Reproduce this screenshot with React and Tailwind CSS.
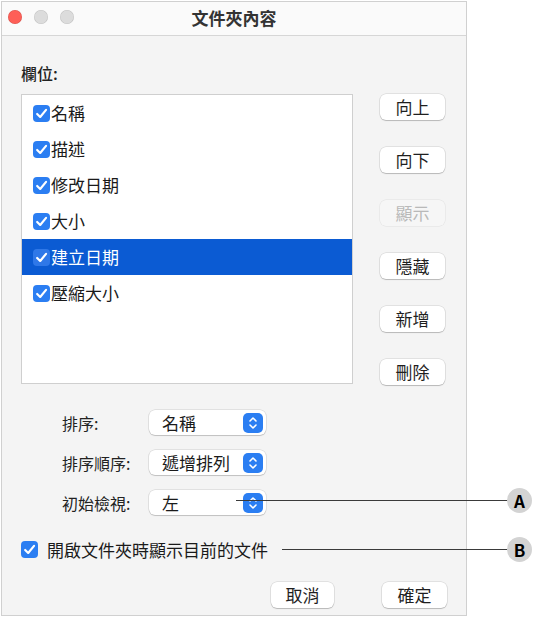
const fields = [
  { name: "名稱" },
  { name: "描述" },
  { name: "修改日期" },
  { name: "大小" },
  { name: "建立日期", selected: true },
  { name: "壓縮大小" },
];

const sideButtons = [
  { label: "向上" },
  { label: "向下" },
  { label: "顯示", disabled: true },
  { label: "隱藏" },
  { label: "新增" },
  { label: "刪除" },
];

const popups = [
  { label: "排序:", value: "名稱" },
  { label: "排序順序:", value: "遞增排列" },
  { label: "初始檢視:", value: "左" },
];

const CheckBox = ({ inverted }) => (
  <span
    className={`flex h-[17px] w-[17px] shrink-0 items-center justify-center rounded-[4px] ${
      inverted ? "bg-[#2f78e8]" : "bg-[#2b7ef2]"
    }`}
  >
    <svg width="13" height="13" viewBox="0 0 12 12" fill="none">
      <path d="M2 6.4 L4.8 9.2 L10.2 2.6" stroke="white" strokeWidth="2" strokeLinecap="round" strokeLinejoin="round" />
    </svg>
  </span>
);

const MacButton = ({ children, disabled, width = "w-[65px]" }) => (
  <button
    className={`${width} h-[26px] rounded-[6px] text-[17px] leading-[26px] ${
      disabled
        ? "bg-[#f6f6f6] text-[#b9b9b9] shadow-[0_0_0_0.5px_rgba(0,0,0,0.08)]"
        : "bg-white text-[#1f1f1f] shadow-[0_0_0_0.5px_rgba(0,0,0,0.15),0_1px_1px_rgba(0,0,0,0.18)]"
    }`}
  >
    {children}
  </button>
);

const Stepper = () => (
  <span className="flex h-[20px] w-[20px] items-center justify-center rounded-[5px] bg-[#2b7ef2]">
    <svg width="10" height="14" viewBox="0 0 10 14" fill="none">
      <path d="M2 5 L5 2 L8 5" stroke="white" strokeWidth="1.6" strokeLinecap="round" strokeLinejoin="round" />
      <path d="M2 9 L5 12 L8 9" stroke="white" strokeWidth="1.6" strokeLinecap="round" strokeLinejoin="round" />
    </svg>
  </span>
);

const Callout = ({ letter, top, left }) => (
  <div className="absolute flex items-center" style={{ top, left }}>
    <div className="h-px bg-[#3a3a3a]" style={{ width: 508 - left }} />
    <div className="flex h-[25px] w-[25px] -translate-x-px items-center justify-center rounded-full bg-[#d3d3d3] text-[17px] font-bold text-black">
      {letter}
    </div>
  </div>
);

export default function App() {
  return (
    <div
      className="relative h-[618px] w-[544px] bg-white pl-px pt-px"
      style={{ fontFamily: '"Noto Sans CJK TC", "Noto Sans", sans-serif' }}
    >
      <div className="flex h-[615px] w-[466px] flex-col border border-[#d0d0d0] bg-[#f4f4f4]">
        {/* title bar */}
        <div className="relative flex h-[34px] shrink-0 items-center justify-center border-b border-[#d6d6d6] bg-[#fafafa]">
          <div className="absolute left-[6px] top-[8px] flex gap-[12px]">
            <span className="h-[14px] w-[14px] rounded-full bg-[#fe5f57] shadow-[inset_0_0_0_0.5px_rgba(0,0,0,0.15)]" />
            <span className="h-[14px] w-[14px] rounded-full bg-[#dcdcdc] shadow-[inset_0_0_0_0.5px_rgba(0,0,0,0.12)]" />
            <span className="h-[14px] w-[14px] rounded-full bg-[#dcdcdc] shadow-[inset_0_0_0_0.5px_rgba(0,0,0,0.12)]" />
          </div>
          <span className="-mt-[2px] text-[17px] font-semibold text-[#333]">文件夾內容</span>
        </div>

        {/* content */}
        <div className="flex flex-col pl-[19px]">
          <div className="mt-[27px] text-[16px] leading-[20px] font-medium text-[#222]">欄位:</div>

          <div className="mt-[11px] flex">
            <div className="flex h-[290px] w-[332px] flex-col border border-[#cfcfcf] bg-white">
              {fields.map((f) => (
                <div
                  key={f.name}
                  className={`flex h-[36px] items-center pl-[11px] text-[17px] ${
                    f.selected ? "bg-[#0b5bd3] text-white" : "text-[#1a1a1a]"
                  }`}
                >
                  <CheckBox inverted={f.selected} />
                  <span className="ml-px">{f.name}</span>
                </div>
              ))}
            </div>

            <div className="ml-[27px] flex flex-col gap-[27px]">
              {sideButtons.map((b) => (
                <MacButton key={b.label} disabled={b.disabled}>
                  {b.label}
                </MacButton>
              ))}
            </div>
          </div>

          <div className="ml-[41px] mt-[25px] flex flex-col gap-[15px]">
            {popups.map((p) => (
              <div key={p.label} className="flex items-center">
                <span className="w-[87px] text-[16px] text-[#222]">{p.label}</span>
                <div className="flex h-[25px] w-[117px] items-center justify-between rounded-[6px] bg-white pl-[13px] pr-[3px] shadow-[0_0_0_0.5px_rgba(0,0,0,0.15),0_1px_1px_rgba(0,0,0,0.15)]">
                  <span className="text-[17px] text-[#1a1a1a]">{p.value}</span>
                  <Stepper />
                </div>
              </div>
            ))}
          </div>

          <div className="mt-[22px] flex items-center">
            <CheckBox />
            <span className="ml-[9px] text-[17px] text-[#1a1a1a]">開啟文件夾時顯示目前的文件</span>
          </div>

          <div className="mt-[19px] flex justify-end gap-[48px] pr-[19px]">
            <MacButton width="w-[63px]">取消</MacButton>
            <MacButton>確定</MacButton>
          </div>
        </div>
      </div>

      <Callout letter="A" top={488} left={236} />
      <Callout letter="B" top={537} left={282} />
    </div>
  );
}
